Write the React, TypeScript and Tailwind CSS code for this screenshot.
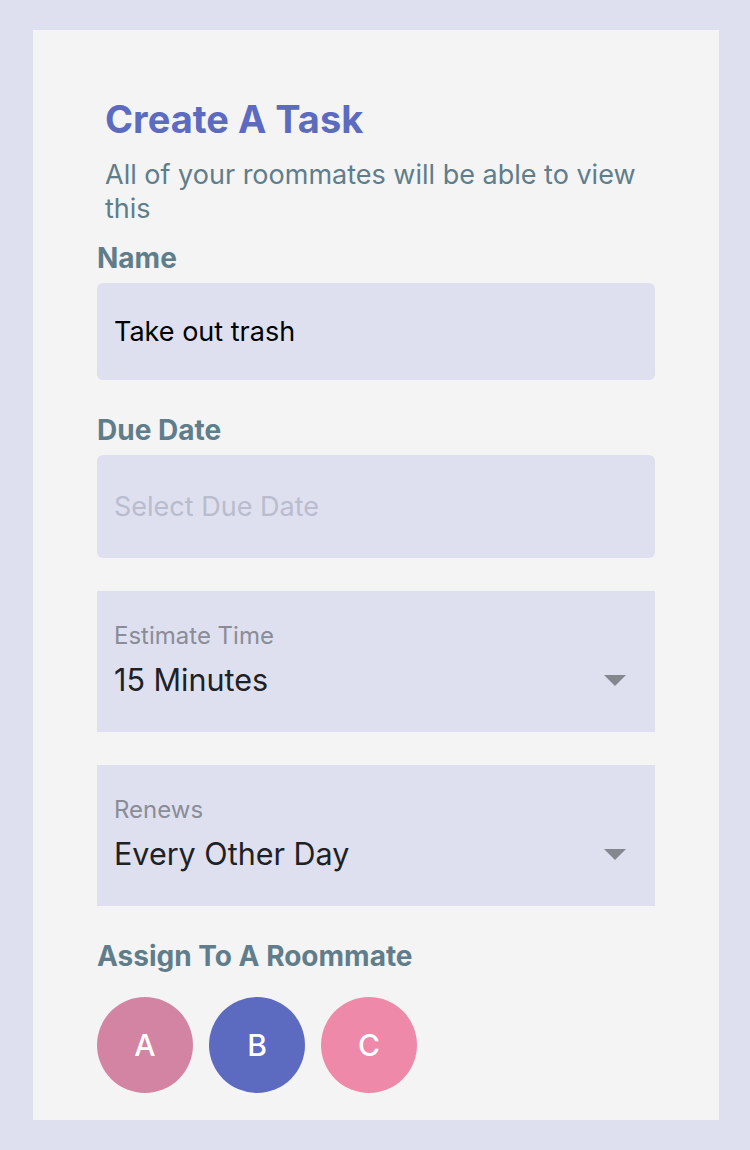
import { ChangeEvent, useState } from "react";

const roommates = [
  { letter: "A", color: "bg-[#d384a2]" },
  { letter: "B", color: "bg-[#5c6bc0]" },
  { letter: "C", color: "bg-[#ef89a9]" },
];

function Caret() {
  return (
    <svg width="22" height="11" viewBox="0 0 22 11" className="shrink-0">
      <path d="M0 0 L22 0 L11 11 Z" fill="#85878f" />
    </svg>
  );
}

function SelectBox({ label, value }: { label: string; value: string }) {
  return (
    <div className="flex h-[141px] flex-col bg-[#dee0f0] pl-[17px] pr-[29px] pt-[30px]">
      <span className="text-[24px] leading-[30px] text-[#8a8c97]">{label}</span>
      <div className="mt-[10px] flex items-center justify-between">
        <span className="text-[30.5px] leading-[38px] text-[#202124]">{value}</span>
        <Caret />
      </div>
    </div>
  );
}

export default function App() {
  const [name, setName] = useState("Take out trash");

  return (
    <div className="min-h-[1150px] bg-[#dee0f0] pb-[30px] pl-[33px] pr-[31px] pt-[30px] font-['Inter',sans-serif]">
      <div className="h-[1090px] bg-[#f4f4f4] px-[64px] pt-[66px]">
        <h1 className="pl-[8px] text-[38px] font-bold leading-[46px] text-[#5c6bc0]">Create A Task</h1>
        <p className="mt-[16px] pl-[8px] pr-[4px] text-[27px] leading-[34px] text-[#607d8b]">
          All of your roommates will be able to view this
        </p>

        <label className="mt-[15px] block text-[28px] font-bold leading-[34px] text-[#607d8b]">Name</label>
        <input
          value={name}
          onChange={(e: ChangeEvent<HTMLInputElement>) => setName(e.target.value)}
          className="mt-[8px] block h-[97px] w-full rounded-[6px] bg-[#dee0f0] px-[17px] text-[27px] text-black outline-none"
        />

        <label className="mt-[33px] block text-[28px] font-bold leading-[34px] text-[#607d8b]">Due Date</label>
        <input
          placeholder="Select Due Date"
          className="mt-[8px] block h-[103px] w-full rounded-[6px] bg-[#dee0f0] px-[17px] text-[27px] text-black outline-none placeholder:text-[#b9bccd]"
        />

        <div className="mt-[33px] flex flex-col gap-[33px]">
          <SelectBox label="Estimate Time" value="15 Minutes" />
          <SelectBox label="Renews" value="Every Other Day" />
        </div>

        <h2 className="mt-[33px] text-[28px] font-bold leading-[34px] text-[#607d8b]">Assign To A Roommate</h2>
        <div className="mt-[24px] flex gap-[16px]">
          {roommates.map((r) => (
            <button
              key={r.letter}
              className={`flex h-[96px] w-[96px] items-center justify-center rounded-full text-[30px] font-medium text-white ${r.color}`}
            >
              {r.letter}
            </button>
          ))}
        </div>
      </div>
    </div>
  );
}
